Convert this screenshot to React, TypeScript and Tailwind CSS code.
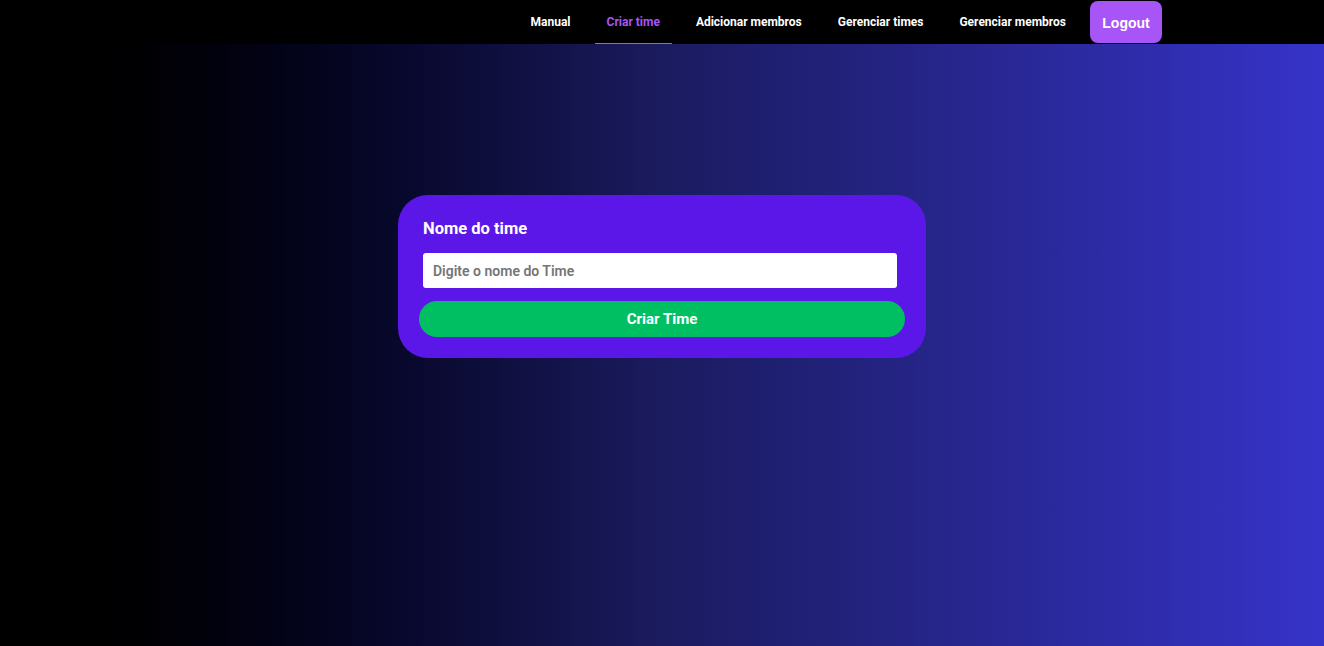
import { useState } from "react";

const links = ["Manual", "Criar time", "Adicionar membros", "Gerenciar times", "Gerenciar membros"];

const App = () => {
  const [teamName, setTeamName] = useState("");
  const active = "Criar time";

  return (
    <div className="flex flex-col min-h-screen font-['Roboto',sans-serif]">
      {/* Navbar */}
      <header className="h-[44px] bg-black flex justify-end pr-[162px]">
        <nav className="flex items-stretch gap-3 h-full">
          {links.map((link) => (
            <a
              key={link}
              href="#"
              className={`flex items-center px-3 text-[12px] font-bold border-b ${
                link === active ? "text-[#a855f7] border-[#a855f7]" : "text-white border-transparent"
              }`}
            >
              {link}
            </a>
          ))}
          <button className="mt-px mb-px pt-[2px] w-[72px] rounded-lg bg-[#a855f7] text-white text-[14px] font-bold font-['Liberation_Sans',sans-serif]">
            Logout
          </button>
        </nav>
      </header>

      {/* Content */}
      <main className="flex-1 h-[602px] bg-gradient-to-r from-black via-[#1b1b60] to-[#3633c9] flex justify-center pt-[151px]">
        <div className="w-[528px] h-[163px] rounded-[30px] bg-[#5b17e8] pl-[21px] pr-[21px] pt-[20px] flex flex-col">
          <label className="pl-1 text-white text-[16.5px] font-bold leading-[28px]">Nome do time</label>
          <input
            value={teamName}
            onChange={(e) => setTeamName(e.target.value)}
            placeholder="Digite o nome do Time"
            className="mt-[10px] ml-1 w-[474px] h-[35px] rounded-[3px] bg-white px-[10px] text-[14px] font-semibold text-gray-800 placeholder:text-[#757575] outline-none"
          />
          <button className="mt-[13px] w-[486px] h-[36px] rounded-full bg-[#00bf63] text-white text-[15px] font-bold">
            Criar Time
          </button>
        </div>
      </main>
    </div>
  );
};

export default App;
